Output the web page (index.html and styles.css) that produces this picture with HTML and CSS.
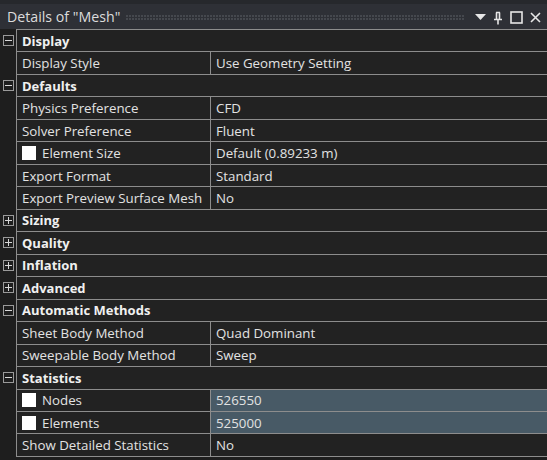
FILE: index.html
```html
<!DOCTYPE html>
<html>
<head>
<meta charset="utf-8">
<link rel="stylesheet" href="styles.css">
</head>
<body>
<div class="panel">
  <div class="titlebar">
    <span class="title">Details of "Mesh"</span>
    <span class="grip"></span>
    <span class="tools">
      <svg width="11" height="7" viewBox="0 0 11 7"><path d="M0 0H11L5.5 6Z" fill="#e6e6e6"/></svg>
      <svg width="10" height="14" viewBox="0 0 10 14"><path d="M3 1.5H7M3.5 1.5V8M6.5 1.5V8M1 8.5H9M5 8.5V13.5" stroke="#e6e6e6" stroke-width="1.6" fill="none"/></svg>
      <svg width="13" height="13" viewBox="0 0 13 13"><rect x="1" y="1" width="11" height="11" stroke="#e6e6e6" stroke-width="1.6" fill="none"/></svg>
      <svg width="11" height="11" viewBox="0 0 11 11"><path d="M1 1L10 10M10 1L1 10" stroke="#e6e6e6" stroke-width="1.6" fill="none"/></svg>
    </span>
  </div>
  <div class="table">
    <div class="row group"><span class="gut"><i class="tog minus"></i></span><span class="hdr">Display</span></div>
    <div class="row"><span class="gut"></span><span class="name">Display Style</span><span class="val">Use Geometry Setting</span></div>
    <div class="row group"><span class="gut"><i class="tog minus"></i></span><span class="hdr">Defaults</span></div>
    <div class="row"><span class="gut"></span><span class="name">Physics Preference</span><span class="val">CFD</span></div>
    <div class="row"><span class="gut"></span><span class="name">Solver Preference</span><span class="val">Fluent</span></div>
    <div class="row"><span class="gut"></span><span class="name"><i class="chk"></i>Element Size</span><span class="val">Default (0.89233 m)</span></div>
    <div class="row"><span class="gut"></span><span class="name">Export Format</span><span class="val">Standard</span></div>
    <div class="row"><span class="gut"></span><span class="name">Export Preview Surface Mesh</span><span class="val">No</span></div>
    <div class="row group"><span class="gut"><i class="tog plus"></i></span><span class="hdr">Sizing</span></div>
    <div class="row group"><span class="gut"><i class="tog plus"></i></span><span class="hdr">Quality</span></div>
    <div class="row group"><span class="gut"><i class="tog plus"></i></span><span class="hdr">Inflation</span></div>
    <div class="row group"><span class="gut"><i class="tog plus"></i></span><span class="hdr">Advanced</span></div>
    <div class="row group"><span class="gut"><i class="tog minus"></i></span><span class="hdr">Automatic Methods</span></div>
    <div class="row"><span class="gut"></span><span class="name">Sheet Body Method</span><span class="val">Quad Dominant</span></div>
    <div class="row"><span class="gut"></span><span class="name">Sweepable Body Method</span><span class="val">Sweep</span></div>
    <div class="row group"><span class="gut"><i class="tog minus"></i></span><span class="hdr">Statistics</span></div>
    <div class="row"><span class="gut"></span><span class="name"><i class="chk"></i>Nodes</span><span class="val ro">526550</span></div>
    <div class="row"><span class="gut"></span><span class="name"><i class="chk"></i>Elements</span><span class="val ro">525000</span></div>
    <div class="row"><span class="gut"></span><span class="name">Show Detailed Statistics</span><span class="val">No</span></div>
  </div>
</div>
</body>
</html>
```
FILE: styles.css
```css
html, body {
  margin: 0;
  padding: 0;
  background: #1e1e1e;
}
.panel {
  width: 547px;
  height: 460px;
  background: #1e1e1e;
  font-family: "Open Sans", "Noto Sans", sans-serif;
  font-size: 13.3px;
  color: #e2e2e2;
  overflow: hidden;
}
.titlebar {
  height: 29px;
  box-sizing: border-box;
  border-top: 4px solid #26282c;
  background: #2e3036;
  display: flex;
  align-items: center;
  padding-left: 7px;
  padding-right: 6px;
}
.title {
  font-size: 14.2px;
  color: #dcdcdc;
  white-space: nowrap;
}
.grip {
  flex: 1;
  height: 6px;
  margin: 2px 10px 0 6px;
  background-image: radial-gradient(circle at 1px 1px, #45484e 0.8px, transparent 1px);
  background-size: 3px 3px;
}
.tools {
  display: flex;
  align-items: center;
  gap: 7px;
  padding-top: 2px;
}
.table {
  border-top: 1px solid #8d8d8d;
  margin-left: 16px;
  position: relative;
}
.row {
  display: grid;
  grid-template-columns: 194px 1fr;
  height: 22.47px;
  box-sizing: border-box;
  border-bottom: 1px solid #8d8d8d;
  border-left: 1px solid #8d8d8d;
  background: #222222;
  position: relative;
  white-space: nowrap;
}
.row .gut {
  position: absolute;
  left: -17px;
  top: -1px;
  bottom: -1px;
  width: 16px;
  background: #1e1e1e;
  display: flex;
  align-items: center;
  justify-content: center;
}
.name, .val, .hdr {
  display: flex;
  align-items: center;
  padding-left: 5px;
}
.name {
  border-right: 1px solid #8d8d8d;
}
.hdr {
  grid-column: 1 / 3;
  font-weight: bold;
  font-size: 13px;
  color: #f0f0f0;
}
.val.ro {
  background: #485a66;
}
.chk {
  display: inline-block;
  width: 14px;
  height: 14px;
  background: #ffffff;
  margin-right: 6px;
}
.tog {
  width: 11px;
  height: 11px;
  box-sizing: border-box;
  border: 1px solid #9a9a9a;
  position: relative;
  display: block;
}
.tog::before {
  content: "";
  position: absolute;
  left: 1px;
  right: 1px;
  top: 4px;
  height: 1px;
  background: #d8d8d8;
}
.tog.plus::after {
  content: "";
  position: absolute;
  top: 1px;
  bottom: 1px;
  left: 4px;
  width: 1px;
  background: #d8d8d8;
}
```
